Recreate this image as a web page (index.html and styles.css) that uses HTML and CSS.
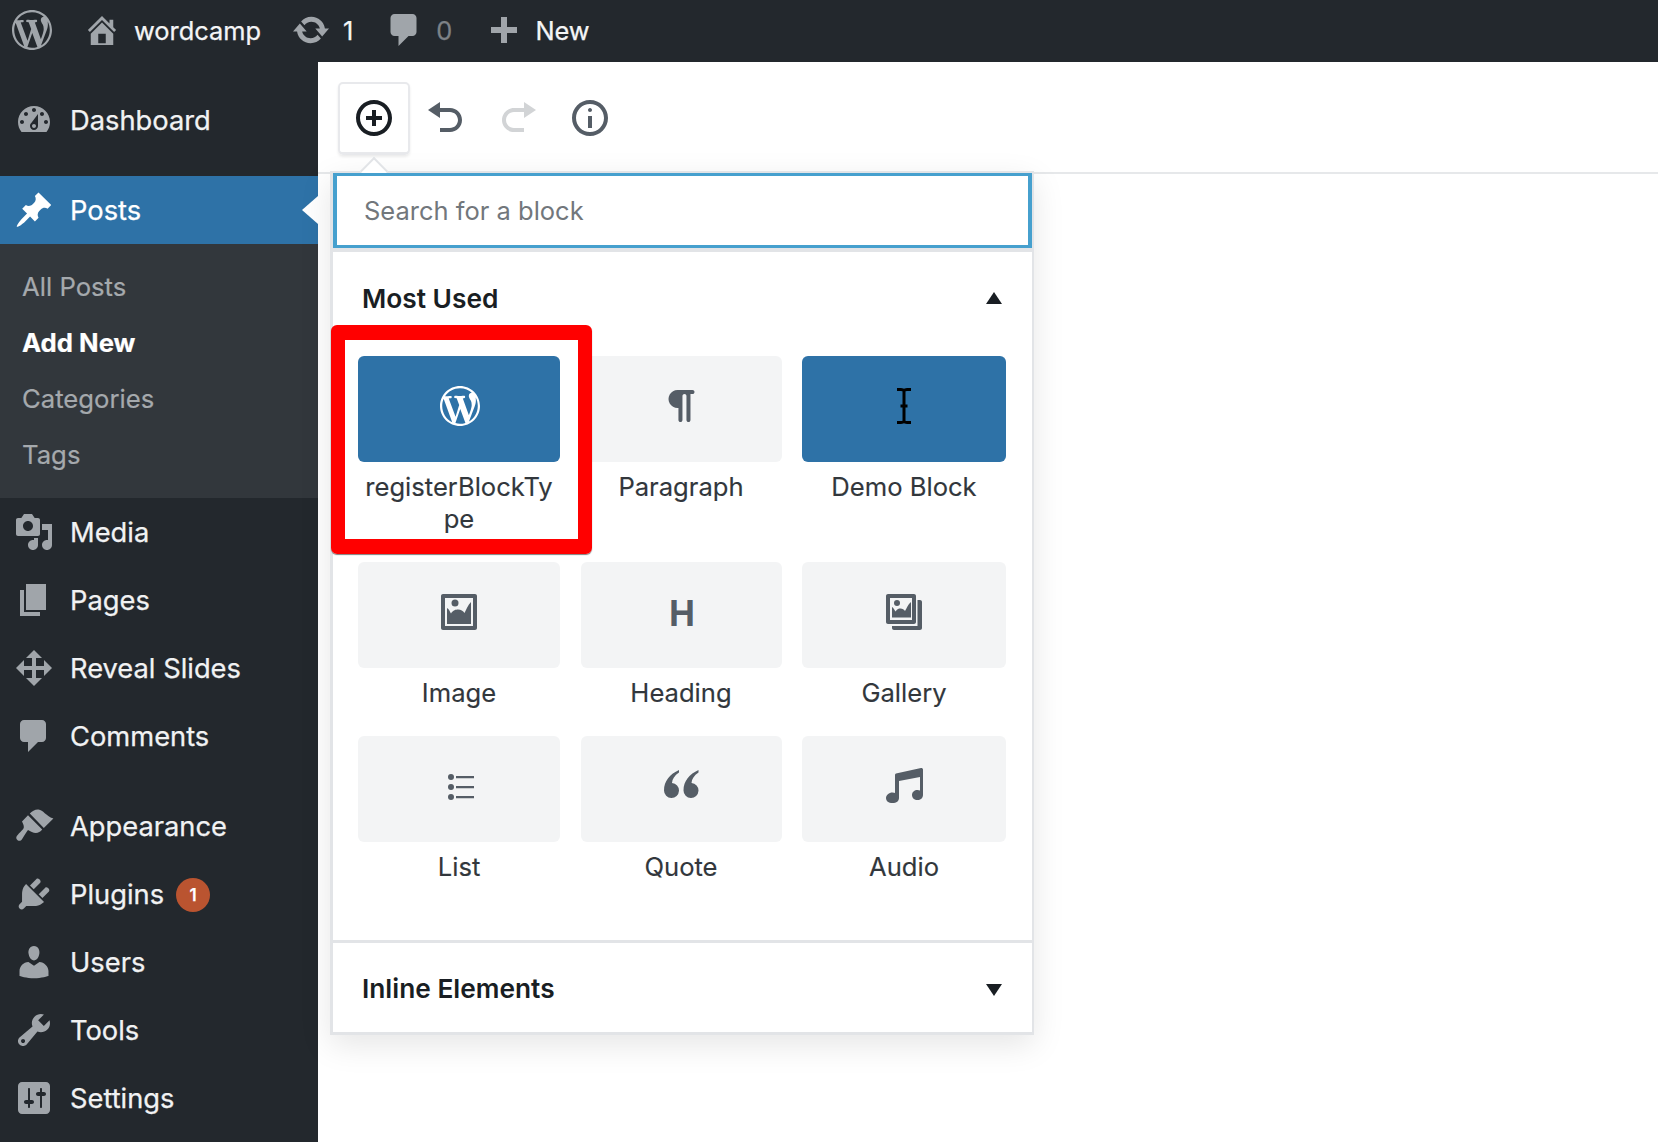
FILE: index.html
```html
<!DOCTYPE html>
<html lang="en">
<head>
<meta charset="utf-8">
<title>Add New Post</title>
<link rel="stylesheet" href="styles.css">
</head>
<body>
<div class="page">
  <header class="adminbar">
    <svg class="bar-logo" viewBox="0 0 20 20"><path fill-rule="evenodd" d="M20 10c0-5.51-4.49-10-10-10C4.48 0 0 4.49 0 10c0 5.52 4.48 10 10 10 5.51 0 10-4.48 10-10zM7.78 15.37L4.37 6.22c.55-.02 1.17-.08 1.17-.08.5-.06.44-1.13-.06-1.11 0 0-1.45.11-2.37.11-.18 0-.37 0-.58-.01C4.12 2.69 6.87 1.11 10 1.11c2.33 0 4.45.87 6.05 2.34-.68-.11-1.65.39-1.65 1.58 0 .74.45 1.36.9 2.1.35.61.55 1.36.55 2.46 0 1.49-1.4 5-1.4 5l-3.03-8.37c.54-.02.82-.17.82-.17.5-.05.44-1.25-.06-1.22 0 0-1.44.12-2.38.12-.87 0-2.33-.12-2.33-.12-.5-.03-.56 1.2-.06 1.22l.92.08 1.26 3.41zM17.41 10c.24-.64.74-1.87.43-4.25.7 1.29 1.05 2.71 1.05 4.25 0 3.29-1.73 6.24-4.4 7.78.97-2.59 1.94-5.2 2.92-7.78zM6.1 18.09C3.12 16.65 1.11 13.53 1.11 10c0-1.3.23-2.48.72-3.59C3.25 10.3 4.67 14.2 6.1 18.09zm4.03-6.63l2.58 6.98c-.86.29-1.76.45-2.71.45-.79 0-1.57-.11-2.29-.33.81-2.38 1.62-4.74 2.42-7.1z"/></svg>
    <svg class="bar-home" viewBox="2 2 16 16"><path fill-rule="evenodd" d="M16 8.5l1.53 1.53-1.06 1.06L10 4.62l-6.47 6.47-1.06-1.06L10 2.5l4 4v-2h2v4zm-6-2.46l6 5.99V18H4v-5.97zM12 17v-5H8v5h4z"/></svg>
    <span class="bar-site">wordcamp</span>
    <svg class="bar-update" viewBox="0.8 3 18.4 14"><path d="M10.2 3.28c3.53 0 6.43 2.61 6.92 6h2.08l-3.5 4-3.5-4h2.32c-.45-1.97-2.21-3.45-4.32-3.45-1.45 0-2.73.71-3.54 1.78L4.95 5.66C6.23 4.2 8.11 3.28 10.2 3.28zm-.4 13.44c-3.52 0-6.43-2.61-6.92-6H.8l3.5-4c1.17 1.33 2.33 2.67 3.5 4H5.48c.45 1.97 2.21 3.45 4.32 3.45 1.45 0 2.73-.71 3.54-1.78l1.71 1.95c-1.28 1.46-3.15 2.38-5.25 2.38z"/></svg>
    <span class="bar-count">1</span>
    <svg class="bar-comment" viewBox="3 2 13 16"><path d="M5 2h9c1.1 0 2 .9 2 2v7c0 1.1-.9 2-2 2h-2l-5 5v-5H5c-1.1 0-2-.9-2-2V4c0-1.1.9-2 2-2z"/></svg>
    <span class="bar-zero">0</span>
    <svg class="bar-plus" viewBox="0 0 26 26"><path d="M10 0h6v10h10v6H16v10h-6V16H0v-6h10z"/></svg>
    <span class="bar-new">New</span>
  </header>
  <div class="body-row">
    <nav class="sidebar">
      <a class="nav-item nav-first">
        <svg class="nav-icon" viewBox="0 0 20 20"><path fill-rule="evenodd" d="M3.76 16h12.48c1.1-1.37 1.76-3.11 1.76-5 0-4.42-3.58-8-8-8s-8 3.58-8 8c0 1.89.66 3.63 1.76 5zM10 4c.55 0 1 .45 1 1s-.45 1-1 1-1-.45-1-1 .45-1 1-1zM6 6c.55 0 1 .45 1 1s-.45 1-1 1-1-.45-1-1 .45-1 1-1zm8 0c.55 0 1 .45 1 1s-.45 1-1 1-1-.45-1-1 .45-1 1-1zm-5.37 5.55L12 7v6c0 1.1-.9 2-2 2s-2-.9-2-2c0-.57.24-1.08.63-1.45zM4 10c.55 0 1 .45 1 1s-.45 1-1 1-1-.45-1-1 .45-1 1-1zm12 0c.55 0 1 .45 1 1s-.45 1-1 1-1-.45-1-1 .45-1 1-1zm-5 3c0-.55-.45-1-1-1s-1 .45-1 1 .45 1 1 1 1-.45 1-1z"/></svg>
        <span>Dashboard</span>
      </a>
      <a class="nav-item nav-current">
        <svg class="nav-icon" viewBox="0 0 20 20"><path d="M10.44 3.02l1.82-1.82 6.36 6.35-1.83 1.82c-1.05-.68-2.48-.57-3.41.36l-.75.75c-.92.93-1.04 2.35-.35 3.41l-1.83 1.82-2.41-2.41-2.8 2.79c-.42.42-3.38 2.71-3.8 2.29s1.86-3.39 2.28-3.81l2.79-2.79L4.1 9.36l1.83-1.82c1.05.69 2.48.57 3.4-.36l.75-.75c.93-.92 1.05-2.35.36-3.41z"/></svg>
        <span>Posts</span>
      </a>
      <ul class="submenu">
        <li>All Posts</li>
        <li class="sub-current">Add New</li>
        <li>Categories</li>
        <li>Tags</li>
      </ul>
      <a class="nav-item">
        <svg class="nav-icon" viewBox="0 0 20 20"><path fill-rule="evenodd" d="M13 11V4c0-.55-.45-1-1-1h-1.67L9 1H5L3.67 3H2c-.55 0-1 .45-1 1v7c0 .55.45 1 1 1h10c.55 0 1-.45 1-1zM7 4.5c1.38 0 2.5 1.12 2.5 2.5S8.38 9.5 7 9.5 4.5 8.38 4.5 7 5.62 4.5 7 4.5zM14 6h5v10.5c0 1.38-1.12 2.5-2.5 2.5S14 17.88 14 16.5s1.12-2.5 2.5-2.5c.17 0 .34.02.5.05V9h-3V6zm-4 8.05V13h2v3.5c0 1.38-1.12 2.5-2.5 2.5S7 17.88 7 16.5 8.12 14 9.5 14c.17 0 .34.02.5.05z"/></svg>
        <span>Media</span>
      </a>
      <a class="nav-item">
        <svg class="nav-icon" viewBox="0 0 20 20"><path d="M6 15V2h10v13H6zm-1 1h8v2H3V5h2v11z"/></svg>
        <span>Pages</span>
      </a>
      <a class="nav-item">
        <svg class="nav-icon" viewBox="0 0 20 20"><path d="M19 10l-4 4v-3h-4v4h3l-4 4-4-4h3v-4H5v3l-4-4 4-4v3h4V5H6l4-4 4 4h-3v4h4V6z"/></svg>
        <span>Reveal Slides</span>
      </a>
      <a class="nav-item nav-group-end">
        <svg class="nav-icon" viewBox="0 0 20 20"><path d="M5 2h9c1.1 0 2 .9 2 2v7c0 1.1-.9 2-2 2h-2l-5 5v-5H5c-1.1 0-2-.9-2-2V4c0-1.1.9-2 2-2z"/></svg>
        <span>Comments</span>
      </a>
      <a class="nav-item">
        <svg class="nav-icon" viewBox="0 0 20 20"><path d="M7.900 3.700C9 2.500 10.500 1.600 12.200 1.700c2.500.2 3.500 3.200 7.500 4.500L14.900 11z"/><path d="M7 4.600l7.100 7.100c-.8 1-2 1.800-3.200 1.800-1.300 0-2.700-.8-3.900-1.500-.7.800-1.500 2.200-3 4.600-.6.900-1.500 1-2.200.5-.7-.5-.9-1.300-.4-2.100 1.500-2 3.400-3.300 3.500-4.300.1-1-.3-1.700-.9-3z"/></svg>
        <span>Appearance</span>
      </a>
      <a class="nav-item">
        <svg class="nav-icon" viewBox="0 0 20 20"><path d="M13.11 4.36L9.87 7.6 8 5.73l3.24-3.24c.35-.34 1.05-.2 1.56.32.52.51.66 1.21.31 1.55zm-8 1.77l.91-1.12 9.01 9.01-1.19.84c-.71.71-2.63 1.16-3.82 1.16H6.14L4.9 17.26c-.59.59-1.54.59-2.12 0-.59-.58-.59-1.53 0-2.12l1.24-1.24v-3.88c0-1.13.4-3.19 1.09-3.89zm7.26 3.97l3.24-3.24c.34-.35 1.04-.21 1.55.31.52.51.66 1.21.31 1.55l-3.24 3.25z"/></svg>
        <span>Plugins</span>
        <b class="badge">1</b>
      </a>
      <a class="nav-item">
        <svg class="nav-icon" viewBox="0 0 20 20"><path d="M10 9.25c-2.27 0-2.73-3.44-2.73-3.44C7 4.02 7.82 2 9.97 2c2.16 0 2.98 2.02 2.71 3.81 0 0-.41 3.44-2.68 3.44zm0 2.57L12.72 10c2.39 0 4.52 2.33 4.52 4.53v2.49s-3.65 1.13-7.24 1.13c-3.65 0-7.24-1.13-7.24-1.13v-2.49c0-2.25 1.94-4.48 4.47-4.48z"/></svg>
        <span>Users</span>
      </a>
      <a class="nav-item">
        <svg class="nav-icon" viewBox="0 0 20 20"><path fill-rule="evenodd" d="M16.68 9.77c-1.34 1.34-3.3 1.67-4.95.99l-5.41 6.52c-.99.99-2.59.99-3.58 0s-.99-2.59 0-3.57l6.52-5.42c-.68-1.65-.35-3.61.99-4.95 1.28-1.28 3.12-1.62 4.72-1.06l-2.89 2.89 2.82 2.82 2.86-2.87c.53 1.58.18 3.39-1.08 4.65zM3.81 16.21c.4.39 1.04.39 1.43 0 .4-.4.4-1.04 0-1.43-.39-.4-1.03-.4-1.43 0-.39.39-.39 1.03 0 1.43z"/></svg>
        <span>Tools</span>
      </a>
      <a class="nav-item">
        <svg class="nav-icon" viewBox="0 0 20 20"><path fill-rule="evenodd" d="M18 16V4c0-1.1-.9-2-2-2H4c-1.1 0-2 .9-2 2v12c0 1.1.9 2 2 2h12c1.1 0 2-.9 2-2zM8 11h1c.55 0 1 .45 1 1s-.45 1-1 1H8v1.5c0 .28-.22.5-.5.5s-.5-.22-.5-.5V13H6c-.55 0-1-.45-1-1s.45-1 1-1h1V5.5c0-.28.22-.5.5-.5s.5.22.5.5V11zm5-2h-1c-.55 0-1-.45-1-1s.45-1 1-1h1V5.5c0-.28.22-.5.5-.5s.5.22.5.5V7h1c.55 0 1 .45 1 1s-.45 1-1 1h-1v5.5c0 .28-.22.5-.5.5s-.5-.22-.5-.5V9z"/></svg>
        <span>Settings</span>
      </a>
    </nav>
    <main class="editor">
      <div class="toolbar">
        <div class="tool tool-active">
          <svg class="tool-icon icon-dark" viewBox="0 0 20 20"><path fill-rule="evenodd" d="M10 1c-5 0-9 4-9 9s4 9 9 9 9-4 9-9-4-9-9-9zm0 16c-3.9 0-7-3.1-7-7s3.1-7 7-7 7 3.1 7 7-3.1 7-7 7zm1-11H9v3H6v2h3v3h2v-3h3V9h-3V6z"/></svg>
        </div>
        <div class="tool">
          <svg class="tool-icon" viewBox="0 0 20 20"><path d="M12 5H7V2L1 6l6 4V7h5c2.2 0 4 1.8 4 4s-1.8 4-4 4H7v2h5c3.3 0 6-2.7 6-6s-2.7-6-6-6z"/></svg>
        </div>
        <div class="tool">
          <svg class="tool-icon icon-disabled" viewBox="0 0 20 20"><path d="M8 5h5V2l6 4-6 4V7H8c-2.2 0-4 1.8-4 4s1.8 4 4 4h5v2H8c-3.3 0-6-2.7-6-6s2.7-6 6-6z"/></svg>
        </div>
        <div class="tool">
          <svg class="tool-icon" viewBox="0 0 20 20"><path fill-rule="evenodd" d="M10 1c-5 0-9 4-9 9s4 9 9 9 9-4 9-9-4-9-9-9zm0 16c-3.9 0-7-3.1-7-7s3.1-7 7-7 7 3.1 7 7-3.1 7-7 7zM9 15h2V9H9v6zm1-10c-.6 0-1 .5-1 1s.4 1 1 1 1-.5 1-1-.4-1-1-1z"/></svg>
        </div>
      </div>
      <section class="popover">
        <span class="popover-arrow"></span>
        <div class="search">Search for a block</div>
        <div class="panel-section">
          <div class="panel-head">
            <span>Most Used</span>
            <i class="tri tri-up"></i>
          </div>
          <div class="block-grid">
            <div class="block">
              <div class="tile tile-blue">
                <svg class="ic-wp" viewBox="0 0 20 20"><path fill-rule="evenodd" d="M20 10c0-5.51-4.49-10-10-10C4.48 0 0 4.49 0 10c0 5.52 4.48 10 10 10 5.51 0 10-4.48 10-10zM7.78 15.37L4.37 6.22c.55-.02 1.17-.08 1.17-.08.5-.06.44-1.13-.06-1.11 0 0-1.45.11-2.37.11-.18 0-.37 0-.58-.01C4.12 2.69 6.87 1.11 10 1.11c2.33 0 4.45.87 6.05 2.34-.68-.11-1.65.39-1.65 1.58 0 .74.45 1.36.9 2.1.35.61.55 1.36.55 2.46 0 1.49-1.4 5-1.4 5l-3.03-8.37c.54-.02.82-.17.82-.17.5-.05.44-1.25-.06-1.22 0 0-1.44.12-2.38.12-.87 0-2.33-.12-2.33-.12-.5-.03-.56 1.2-.06 1.22l.92.08 1.26 3.41zM17.41 10c.24-.64.74-1.87.43-4.25.7 1.29 1.05 2.71 1.05 4.25 0 3.29-1.73 6.24-4.4 7.78.97-2.59 1.94-5.2 2.92-7.78zM6.1 18.09C3.12 16.65 1.11 13.53 1.11 10c0-1.3.23-2.48.72-3.59C3.25 10.3 4.67 14.2 6.1 18.09zm4.03-6.63l2.58 6.98c-.86.29-1.76.45-2.71.45-.79 0-1.57-.11-2.29-.33.81-2.38 1.62-4.74 2.42-7.1z"/></svg>
              </div>
              <div class="label">registerBlockType</div>
            </div>
            <div class="block">
              <div class="tile">
                <svg class="ic-para" viewBox="3 2 13 16"><path d="M15 2H7.54c-.83 0-1.59.2-2.28.6-.7.41-1.25.96-1.65 1.65C3.2 4.94 3 5.7 3 6.52s.2 1.58.61 2.27c.4.69.95 1.24 1.65 1.64.69.41 1.45.61 2.28.61h.43V17c0 .27.1.51.29.71.2.19.44.29.71.29.28 0 .51-.1.71-.29.2-.2.3-.44.3-.71V5c0-.27.09-.51.29-.71.2-.19.44-.29.71-.29s.51.1.71.29c.19.2.29.44.29.71v12c0 .27.1.51.3.71.2.19.43.29.71.29.27 0 .51-.1.71-.29.19-.2.29-.44.29-.71V4H15c.27 0 .5-.1.7-.3.2-.19.3-.43.3-.7s-.1-.51-.3-.71C15.5 2.1 15.27 2 15 2z"/></svg>
              </div>
              <div class="label">Paragraph</div>
            </div>
            <div class="block">
              <div class="tile tile-blue">
                <svg class="ic-cursor" viewBox="0 0 16 36"><path d="M1 1.500h4c1.300 0 2.400.4 3 1.200.6-.8 1.700-1.200 3-1.200h4M1 34.500h4c1.300 0 2.400-.4 3-1.200.6.8 1.700 1.200 3 1.200h4M8 3v30M4.500 18h7"/></svg>
              </div>
              <div class="label">Demo Block</div>
            </div>
            <div class="block">
              <div class="tile">
                <svg class="ic-img" viewBox="0 0 36 36"><path fill-rule="evenodd" d="M2 0h32c1.100 0 2 .9 2 2v32c0 1.100-.9 2-2 2H2c-1.100 0-2-.9-2-2V2C0 .9.9 0 2 0zm2 4v28h28V4z"/><path d="M6 14c2 1 3 4 4 5.500 2-3.500 5-4 7-4 3 0 5 1.500 6.500 3.500 1.500-3 3.500-8 6.500-11v22H6z"/><circle cx="14" cy="9" r="3.500"/></svg>
              </div>
              <div class="label">Image</div>
            </div>
            <div class="block">
              <div class="tile">
                <span class="ic-h">H</span>
              </div>
              <div class="label">Heading</div>
            </div>
            <div class="block">
              <div class="tile">
                <svg class="ic-img" viewBox="0 0 36 36"><path fill-rule="evenodd" d="M2 0h26c1.100 0 2 .9 2 2v26c0 1.100-.9 2-2 2H2c-1.100 0-2-.9-2-2V2C0 .9.900 0 2 0zm2 4v22h22V4z"/><path d="M6 13c1.500.8 2.500 3 3.500 4.500 1.500-2.500 3.500-3 5-3 2 0 3.500 1 4.500 2.500 1.500-2.500 3-6.500 6-9v15.500H6z"/><circle cx="11" cy="9" r="3"/><path d="M31.500 6H34c1.100 0 2 .9 2 2v26c0 1.100-.9 2-2 2H8c-1.100 0-2-.9-2-2v-2h25.500z"/></svg>
              </div>
              <div class="label">Gallery</div>
            </div>
            <div class="block">
              <div class="tile">
                <svg class="ic-list" viewBox="0 0 26 26"><circle cx="3" cy="3" r="3"/><circle cx="3" cy="13" r="3"/><circle cx="3" cy="23" r="3"/><path d="M8 2h18v2.200H8zM8 12h18v2.200H8zM8 22h18v2.200H8z"/></svg>
              </div>
              <div class="label">List</div>
            </div>
            <div class="block">
              <div class="tile">
                <svg class="ic-quote" viewBox="0 0 35 28"><path d="M15 0C6 4 0 11 0 20.500A7.500 7.500 0 1 0 8 13c.3-4 2.500-7.500 7-10.500zM34.500 0c-9 4-15 11-15 20.500a7.500 7.500 0 1 0 8-7.500c.3-4 2.500-7.500 7-10.500z"/></svg>
              </div>
              <div class="label">Quote</div>
            </div>
            <div class="block">
              <div class="tile">
                <svg class="ic-audio" viewBox="0 0 37 36"><path d="M10 6.500L35 1c1-.2 2 .5 2 1.500v25.500c0 3-2.500 5-5.500 5S26 31 26 28s2.500-5 5.500-5c1 0 2 .2 2.500.5V10L13 14v17c0 3-2.500 5-6.500 5S0 34 0 31s3-5.500 6.500-5.500c1.200 0 2 .2 2.500.5V8c0-.7.400-1.300 1-1.500z"/></svg>
              </div>
              <div class="label">Audio</div>
            </div>
          </div>
        </div>
        <div class="panel-head panel-foot">
          <span>Inline Elements</span>
          <i class="tri tri-down"></i>
        </div>
        <div class="red-frame"></div>
      </section>
    </main>
  </div>
</div>
</body>
</html>
```
FILE: styles.css
```css
* { box-sizing: border-box; }
html, body { margin: 0; padding: 0; height: 100%; overflow: hidden; background: #fff; }
body { font-family: Inter, "Liberation Sans", sans-serif; }
.page { display: flex; flex-direction: column; height: 1142px; }

.adminbar { display: flex; align-items: center; height: 62px; padding-bottom: 2px; flex: none; background: #23282d; color: #f4f5f6; font-size: 25.400px; -webkit-text-stroke: .25px currentColor; }
.adminbar svg { fill: #a0a5aa; flex: none; }
.bar-logo { width: 40px; height: 40px; margin-left: 12px; }
.bar-home { width: 30px; height: 32px; margin-left: 35px; }
.bar-site { margin-left: 17px; }
.bar-update { width: 36px; height: 28px; margin-left: 32px; }
.bar-count { margin-left: 14px; }
.bar-comment { width: 27px; height: 32px; margin-left: 37px; }
.bar-zero { margin-left: 19px; color: #7d8287; }
.bar-plus { width: 26px; height: 26px; margin-left: 39px; }
.bar-new { margin-left: 18px; }

.body-row { display: flex; flex: 1; min-height: 0; }

.sidebar { width: 318px; flex: none; background: #23282d; color: #f1f2f3; padding-top: 24px; }
.nav-item { position: relative; display: flex; align-items: center; height: 68px; padding-left: 14px; font-size: 27.300px; -webkit-text-stroke: .25px currentColor; }
.nav-icon { width: 40px; height: 40px; fill: #a0a5aa; flex: none; margin-right: 16px; }
.nav-first { margin-bottom: 22px; }
.nav-group-end { margin-bottom: 22px; }
.nav-current { background: #2e72a7; color: #fff; }
.nav-current .nav-icon { fill: #fff; }
.nav-current::after { content: ""; position: absolute; right: 0; top: 20px; border: 14px solid transparent; border-left-width: 0; border-right: 16px solid #fff; }
.badge { display: flex; align-items: center; justify-content: center; width: 34px; height: 34px; margin: 2px 0 0 12px; border-radius: 50%; background: #ba5430; color: #fff; font-size: 17px; font-weight: 600; }

.submenu { list-style: none; margin: 0; padding: 14px 0 16px; background: #32373c; color: #a5a9ad; font-size: 25.700px; -webkit-text-stroke: .2px currentColor; }
.submenu li { display: flex; align-items: center; height: 56px; padding-left: 22px; }
.sub-current { color: #fff; font-weight: 700; }

.editor { position: relative; flex: 1; min-width: 0; }
.toolbar { display: flex; align-items: center; height: 112px; padding: 2px 0 0 20px; border-bottom: 2px solid #e6e8ea; }
.tool { display: flex; align-items: center; justify-content: center; width: 72px; height: 71px; border-radius: 5px; }
.tool-active { width: 72px; height: 73px; border: 2px solid #e8e9ec; border-bottom-width: 3px; box-shadow: 0 2px 3px rgba(0,0,0,.08); }
.tool-icon { width: 40px; height: 40px; fill: #555d66; }
.icon-dark { fill: #191e23; }
.icon-disabled { fill: #d2d4d6; }

.popover { position: absolute; left: 12px; top: 109px; width: 704px; height: 864px; background: #fff; border: solid #e2e4e7; border-width: 2px 2px 3px 3px; box-shadow: 0 10px 30px rgba(0,0,0,.1); display: flex; flex-direction: column; color: #32373c; }
.popover-arrow { position: absolute; left: 31px; top: -12px; width: 20px; height: 20px; background: #fff; border-left: 2px solid #e2e4e7; border-top: 2px solid #e2e4e7; transform: rotate(45deg); }
.search { position: relative; display: flex; align-items: center; flex: none; height: 75px; padding-left: 27px; border: solid #46a0ce; border-width: 3.500px 4px; background: #fff; color: #72777c; font-size: 25.500px; box-shadow: 0 4px 0 #e2e4e7; }
.panel-section { flex: 1; padding: 2px 25px 0; border-bottom: 3px solid #e2e4e7; }
.panel-head { display: flex; align-items: center; justify-content: space-between; height: 96px; color: #191e23; font-size: 26.300px; font-weight: 600; }
.panel-foot { height: 89px; padding: 2px 30px 0 29px; }
.panel-section .panel-head { padding: 0 2px 0 2px; margin-right: 3px; margin-left: 2px; }
.tri { display: block; width: 0; height: 0; border-left: 8px solid transparent; border-right: 8px solid transparent; }
.tri-up { border-bottom: 12px solid #191e23; }
.tri-down { border-top: 12px solid #191e23; margin-top: 3px; }
.block-grid { display: grid; grid-template-columns: 202px 201px 204px; column-gap: 20.500px; align-items: start; margin-top: 10px; }
.block { margin-bottom: 27px; }
.block:nth-child(-n+3) { margin-bottom: 0; height: 206px; }
.tile { display: flex; align-items: center; justify-content: center; height: 106px; border-radius: 6px; background: #f3f4f5; }
.tile svg { fill: #555d66; display: block; }
.tile-blue { background: #2e72a7; }
.label { margin-top: 9px; line-height: 32px; font-size: 25.600px; text-align: center; overflow-wrap: anywhere; padding: 0 6px; -webkit-text-stroke: .15px currentColor; }
.tile-blue .ic-wp { width: 40px; height: 40px; fill: #fff; margin: 0 0 7px 2px; }
.ic-para { width: 27px; height: 32px; margin-bottom: 6px; }
.ic-cursor { width: 18px; height: 36px; margin-bottom: 6px; fill: none !important; stroke: #000; stroke-width: 3; }
.ic-img { width: 36px; height: 36px; margin-bottom: 6px; }
.ic-h { font-family: "Liberation Sans", sans-serif; font-weight: 700; font-size: 36px; line-height: 1; color: #555d66; margin: 0 0 2px 2px; }
.ic-list { width: 26px; height: 26px; margin: 0 0 4px 3px; }
.ic-quote { width: 35px; height: 28px; margin: 0 0 11px 0; }
.ic-audio { width: 37px; height: 36px; margin-bottom: 9px; }

.red-frame { position: absolute; left: -2px; top: 152px; width: 261px; height: 229px; border: solid #ff0000; border-width: 15px 14px; border-radius: 6px; box-shadow: 0 1px 1px rgba(0,0,0,.5); }
```
